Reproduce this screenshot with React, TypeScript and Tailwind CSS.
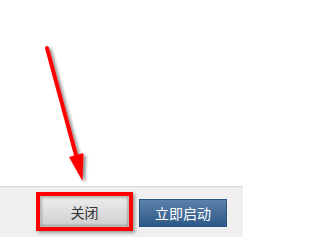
import React from "react";

export default function App() {
  return (
    <div className="relative w-[243px] h-[237px] overflow-hidden bg-white" style={{ fontFamily: '"Noto Sans CJK SC", "Liberation Sans", sans-serif' }}>
      <div className="h-[187px] bg-white border-b border-[#d6d6d6]" />
      <div className="h-[50px] bg-[#f0f0f0] flex justify-end items-start pt-[5px] pr-[16px]">
        <div className="w-[97px] h-[39px] border-[4px] border-[#ff0000] shadow-[2px_2px_3px_rgba(0,0,0,0.35)] bg-[#bdbdbd] p-[1px]">
          <button className="w-full h-full bg-gradient-to-b from-[#ececec] to-[#cfcfcf] shadow-[inset_0_0_3px_rgba(0,0,0,0.45)] text-[14px] leading-none text-[#333] flex items-center justify-center">
            关闭
          </button>
        </div>
        <button className="ml-[6px] mt-[7px] w-[88px] h-[28px] bg-gradient-to-b from-[#5d82ab] to-[#2c5987] border border-[#2a5582] text-white text-[14px] leading-none flex items-center justify-center">
          立即启动
        </button>
      </div>
      <svg className="absolute left-0 top-0 pointer-events-none" width="243" height="237" viewBox="0 0 243 237">
        <defs>
          <filter id="sh" x="-50%" y="-50%" width="200%" height="200%">
            <feDropShadow dx="2.5" dy="2" stdDeviation="1.5" floodColor="#000" floodOpacity="0.45" />
          </filter>
        </defs>
        <g filter="url(#sh)">
          <line x1="47" y1="48" x2="76.5" y2="157" stroke="#ff0000" strokeWidth="4" strokeLinecap="round" />
          <polygon points="69,157 83.5,153 82.5,181" fill="#ff0000" />
        </g>
      </svg>
    </div>
  );
}
